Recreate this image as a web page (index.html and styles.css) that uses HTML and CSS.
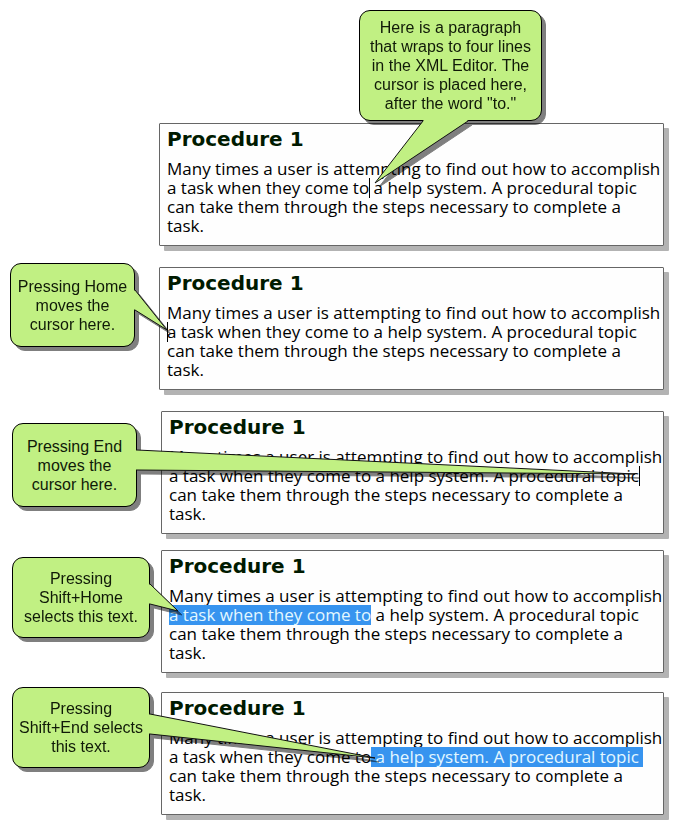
FILE: index.html
```
<!DOCTYPE html>
<html lang="en">
<head>
<meta charset="utf-8">
<title>Home and End keys in the XML Editor</title>
<link rel="stylesheet" href="styles.css">
</head>
<body>
<main class="figure">
  <section class="step step-intro">
    <aside class="callout callout-top">
      <svg class="tail tail-down" width="96" height="65" viewBox="0 0 96 65" aria-hidden="true"><path d="M49 0V1L1 63L94 1V0"/></svg>
      Here is a paragraph<br>that wraps to four lines<br>in the XML Editor. The<br>cursor is placed here,<br>after the word "to."
    </aside>
    <article class="panel">
      <h2>Procedure 1</h2>
      <p>Many times a user is attempting to find out how to accomplish<br>a task when they come to<span class="caret"></span> a help system. A procedural topic<br>can take them through the steps necessary to complete a<br>task.</p>
    </article>
  </section>

  <section class="step step-home">
    <aside class="callout">
      <svg class="tail" width="36" height="44" viewBox="0 0 36 44" aria-hidden="true"><path d="M0 1H1L33 41L1 21H0"/></svg>
      Pressing Home<br>moves the<br>cursor here.
    </aside>
    <article class="panel">
      <h2>Procedure 1</h2>
      <p>Many times a user is attempting to find out how to accomplish<br><span class="caret"></span>a task when they come to a help system. A procedural topic<br>can take them through the steps necessary to complete a<br>task.</p>
    </article>
  </section>

  <section class="step step-end">
    <aside class="callout">
      <svg class="tail" width="500" height="28" viewBox="0 0 500 28" aria-hidden="true"><path d="M0 1H1L499 25L1 21H0"/></svg>
      Pressing End<br>moves the<br>cursor here.
    </aside>
    <article class="panel">
      <h2>Procedure 1</h2>
      <p>Many times a user is attempting to find out how to accomplish<br>a task when they come to a help system. A procedural topic<span class="caret"></span><br>can take them through the steps necessary to complete a<br>task.</p>
    </article>
  </section>

  <section class="step step-shift-home">
    <aside class="callout">
      <svg class="tail" width="32" height="32" viewBox="0 0 32 32" aria-hidden="true"><path d="M0 1H1L29 28L1 21H0"/></svg>
      Pressing<br>Shift+Home<br>selects this text.
    </aside>
    <article class="panel">
      <h2>Procedure 1</h2>
      <p>Many times a user is attempting to find out how to accomplish<br><mark>a task when they come to</mark> a help system. A procedural topic<br>can take them through the steps necessary to complete a<br>task.</p>
    </article>
  </section>

  <section class="step step-shift-end">
    <aside class="callout">
      <svg class="tail" width="228" height="48" viewBox="0 0 228 48" aria-hidden="true"><path d="M0 1H1L226 45L1 21H0"/></svg>
      Pressing<br>Shift+End selects<br>this text.
    </aside>
    <article class="panel">
      <h2>Procedure 1</h2>
      <p>Many times a user is attempting to find out how to accomplish<br>a task when they come to<mark> a help system. A procedural topic&nbsp;</mark><br>can take them through the steps necessary to complete a<br>task.</p>
    </article>
  </section>
</main>
</body>
</html>
```
FILE: styles.css
```
body {
  margin: 0;
  background: #fff;
  color: #000;
}

.figure {
  padding: 10px 16px 14px 10px;
}

.step {
  display: grid;
  grid-template-columns: 149px 1fr;
  align-items: start;
}

.step-home { margin-top: 21px; }

.step-end {
  margin-top: 21px;
  padding-left: 2px;
}

.step-shift-home {
  margin-top: 16px;
  padding-left: 2px;
}

.step-shift-end {
  margin-top: 19px;
  padding-left: 2px;
}

/* Panels */
.panel {
  box-sizing: border-box;
  grid-column: 2;
  padding: 3px 0 10px 7px;
  border: 1px solid #666;
  border-radius: 1px;
  background: #fefefe;
  box-shadow: 5px 5px 0 #b3b3b3;
  white-space: nowrap;
}

.panel h2 {
  margin: 0 0 8px;
  color: #001a00;
  font: bold 20px/24px "DejaVu Sans", Verdana, sans-serif;
}

.panel p {
  margin: 0;
  font: 17px/19px "Open Sans", Verdana, sans-serif;
}

.panel mark {
  background: linear-gradient(#3794ef, #3794ef) center / 100% 20px no-repeat;
  color: #e4f8ff;
}

/* Insertion point, laid over the text so it takes up no room in the line */
.caret {
  position: absolute;
  height: 20px;
  border-left: 1px solid #000;
}

/* Callouts */
.callout {
  position: relative;
  z-index: 1;
  box-sizing: border-box;
  justify-self: start;
  width: 125px;
  padding: 13px 0 12px;
  border: 1px solid #000;
  border-radius: 11px;
  background: #c1f083;
  color: #101a08;
  filter: drop-shadow(4px 4px 0 rgba(0, 0, 0, 0.5));
  font: 16px/19px "Liberation Sans", Arial, sans-serif;
  text-align: center;
  white-space: nowrap;
}

.callout-top {
  grid-column: 2;
  width: 183px;
  margin: 0 0 2px 200px;
  padding: 7px 0;
}

.step-home .callout { margin-top: -4px; }
.step-end .callout { margin-top: 12px; }

.step-shift-home .callout {
  width: 138px;
  margin-top: 7px;
  padding: 11px 0;
}

.step-shift-end .callout {
  width: 138px;
  margin-top: -5px;
  padding: 11px 0;
}

/* Tails overlap the bubble border to open it at the base */
.tail {
  position: absolute;
  top: 25px;
  left: 100%;
  fill: #c1f083;
  stroke: #111;
  stroke-width: 1;
}

.tail-down {
  top: 100%;
  left: 14px;
}
```
